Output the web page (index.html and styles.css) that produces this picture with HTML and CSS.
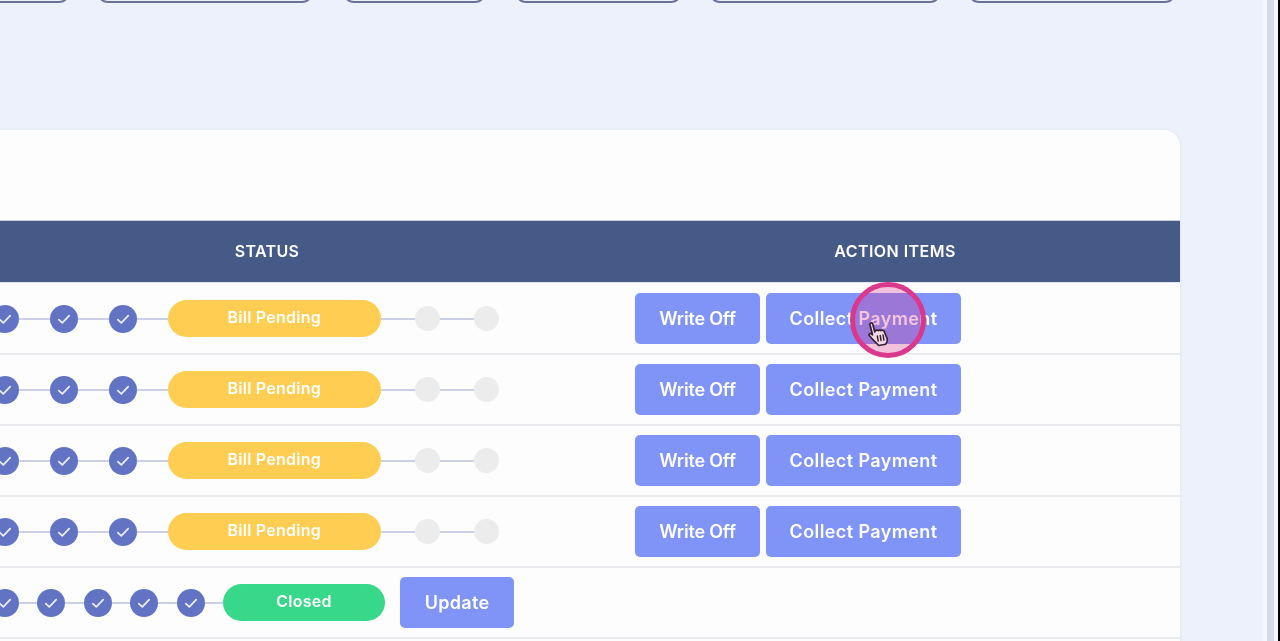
FILE: index.html
```html
<!DOCTYPE html>
<html lang="en">
<head>
<meta charset="utf-8">
<title>Bills</title>
<link rel="stylesheet" href="styles.css">
</head>
<body>
<svg class="defs" width="0" height="0" aria-hidden="true">
  <symbol id="check" viewBox="0 0 28 28"><path d="M8.800 14.600l3.500 3.300 6.900-7.200" fill="none" stroke="#eceefa" stroke-width="1.700" stroke-linecap="round" stroke-linejoin="round"/></symbol>
</svg>
<div class="page">
  <main class="main">
    <div class="filters">
      <div class="filter f1"></div>
      <div class="filter f2"></div>
      <div class="filter f3"></div>
      <div class="filter f4"></div>
      <div class="filter f5"></div>
      <div class="filter f6"></div>
    </div>
    <section class="card">
      <div class="card-top"></div>
      <div class="row head">
        <div class="th">STATUS</div>
        <div class="th th-actions">ACTION ITEMS</div>
      </div>

      <div class="row">
        <div class="steps">
          <span class="dot"><svg><use href="#check"/></svg></span><i class="line"></i>
          <span class="dot"><svg><use href="#check"/></svg></span><i class="line"></i>
          <span class="dot"><svg><use href="#check"/></svg></span><i class="line"></i>
          <span class="pill pending">Bill Pending</span><i class="line wide"></i>
          <span class="dot todo"></span><i class="line wide"></i>
          <span class="dot todo"></span>
        </div>
        <div class="actions"><button class="btn write">Write Off</button><button class="btn collect">Collect Payment</button></div>
      </div>

      <div class="row">
        <div class="steps">
          <span class="dot"><svg><use href="#check"/></svg></span><i class="line"></i>
          <span class="dot"><svg><use href="#check"/></svg></span><i class="line"></i>
          <span class="dot"><svg><use href="#check"/></svg></span><i class="line"></i>
          <span class="pill pending">Bill Pending</span><i class="line wide"></i>
          <span class="dot todo"></span><i class="line wide"></i>
          <span class="dot todo"></span>
        </div>
        <div class="actions"><button class="btn write">Write Off</button><button class="btn collect">Collect Payment</button></div>
      </div>

      <div class="row">
        <div class="steps">
          <span class="dot"><svg><use href="#check"/></svg></span><i class="line"></i>
          <span class="dot"><svg><use href="#check"/></svg></span><i class="line"></i>
          <span class="dot"><svg><use href="#check"/></svg></span><i class="line"></i>
          <span class="pill pending">Bill Pending</span><i class="line wide"></i>
          <span class="dot todo"></span><i class="line wide"></i>
          <span class="dot todo"></span>
        </div>
        <div class="actions"><button class="btn write">Write Off</button><button class="btn collect">Collect Payment</button></div>
      </div>

      <div class="row">
        <div class="steps">
          <span class="dot"><svg><use href="#check"/></svg></span><i class="line"></i>
          <span class="dot"><svg><use href="#check"/></svg></span><i class="line"></i>
          <span class="dot"><svg><use href="#check"/></svg></span><i class="line"></i>
          <span class="pill pending">Bill Pending</span><i class="line wide"></i>
          <span class="dot todo"></span><i class="line wide"></i>
          <span class="dot todo"></span>
        </div>
        <div class="actions"><button class="btn write">Write Off</button><button class="btn collect">Collect Payment</button></div>
      </div>

      <div class="row">
        <div class="steps">
          <span class="dot"><svg><use href="#check"/></svg></span><i class="line short"></i>
          <span class="dot"><svg><use href="#check"/></svg></span><i class="line short"></i>
          <span class="dot"><svg><use href="#check"/></svg></span><i class="line short"></i>
          <span class="dot"><svg><use href="#check"/></svg></span><i class="line short"></i>
          <span class="dot"><svg><use href="#check"/></svg></span><i class="line short"></i>
          <span class="pill closed">Closed</span>
          <button class="btn update">Update</button>
        </div>
      </div>
    </section>
  </main>
  <div class="rail"><div class="rail-gap"></div><div class="rail-bar"></div><div class="rail-gap"></div><div class="rail-edge"></div></div>
</div>
<div class="click-ring">
  <svg class="hand" viewBox="0 0 22 26" width="23" height="27" aria-hidden="true">
    <g transform="rotate(-10 11 13)">
    <path d="M3.400 2.800c0-1.500 2.600-1.600 2.800 0l.6 8 .6-1c.9-.8 2.300-.6 2.800.3.800-.6 2.200-.5 2.700.5.900-.5 2.300-.3 2.800.7l1.600 7.200c.4 2.400-.6 4.300-2.300 5.700H8.200L3.600 17.500 1 13.200c-.6-1.400 1.100-2.300 2.200-1.300l1 1.200z" fill="#f3d9e8" stroke="#35202c" stroke-width="1.600" stroke-linejoin="round"/>
    <path d="M8.500 15v5M11.300 15v5M14.100 15v5" stroke="#35202c" stroke-width="1.400" stroke-linecap="round"/>
    </g>
  </svg>
</div>
</body>
</html>
```

FILE: styles.css
```css
* { box-sizing: border-box; }
html, body { margin: 0; height: 100%; overflow: hidden; }
body { font-family: Inter, "Liberation Sans", sans-serif; background: #edf1fc; position: relative; }
.defs { position: absolute; }
.page { display: flex; height: 100%; }
.main { flex: 1; min-width: 0; }

.filters { display: flex; gap: 27px; margin: -40px 0 0 -100px; }
.filter { height: 43px; border: 2px solid #6a7397; border-radius: 11px; flex: none; filter: blur(.3px); }
.f1 { width: 170px; }
.f2 { width: 216px; }
.f3 { width: 143px; margin-left: 3px; }
.f4 { width: 167px; margin-left: 2px; }
.f5 { width: 232px; }
.f6 { width: 208px; }

.card { margin: 127px 83px 0 -101px; padding-bottom: 20px; background: #fdfdfe; border-radius: 16px 16px 0 0; box-shadow: 0 0 3px rgba(190, 198, 225, .35); filter: blur(.35px); }
.card-top { height: 90px; }

.row { display: grid; grid-template-columns: 736px 1fr; align-items: center; height: 71px; border-bottom: 2px solid #e9eaee; }
.head { height: 63px; margin-bottom: 1px; background: #465a87; border-top: 1.5px solid #c8cdd9; border-bottom: 1.5px solid #e4e6ee; }
.th { color: #fff; font-size: 16px; font-weight: 600; text-align: center; letter-spacing: .35px; padding-bottom: 2px; }
.th-actions { padding-right: 25px; letter-spacing: .45px; }

.steps { display: flex; align-items: center; padding-left: 91.5px; }
.dot { width: 28px; height: 28px; border-radius: 50%; background: #6373c4; flex: none; display: block; }
.dot svg { width: 28px; height: 28px; display: block; }
.todo { width: 25px; height: 25px; background: #ececec; }
.line { width: 31px; height: 2px; background: #ccd0e6; flex: none; }
.line.wide { width: 34px; }
.line.short { width: 18.500px; }

.pill { height: 37px; border-radius: 19px; color: #fff; font-size: 16px; font-weight: 600; letter-spacing: .25px; padding-bottom: 4px; display: flex; align-items: center; justify-content: center; flex: none; }
.pending { width: 213.5px; background: #fecd52; }
.closed { width: 162px; background: #37d88a; }

.actions { display: flex; gap: 6px; }
.btn { height: 51px; border: 0; border-radius: 5px; background: #8094f8; color: #fff; font: 600 18px Inter, "Liberation Sans", sans-serif; letter-spacing: .4px; padding: 0; flex: none; }
.write { width: 125px; letter-spacing: -.2px; }
.collect { width: 195px; }
.update { width: 114px; margin-left: 15px; letter-spacing: .3px; }

.rail { width: 17px; display: flex; flex: none; }
.rail-gap { width: 4px; background: #f4f6fd; }
.rail-bar { width: 7px; background: #d5d9ee; }
.rail-edge { width: 2px; background: #000; }

.click-ring { position: absolute; left: 850px; top: 282px; width: 76px; height: 76px; border-radius: 50%; border: 5px solid #d9388c; background: rgba(217, 56, 140, .3); }
.hand { position: absolute; left: 13px; top: 33px; }
```
